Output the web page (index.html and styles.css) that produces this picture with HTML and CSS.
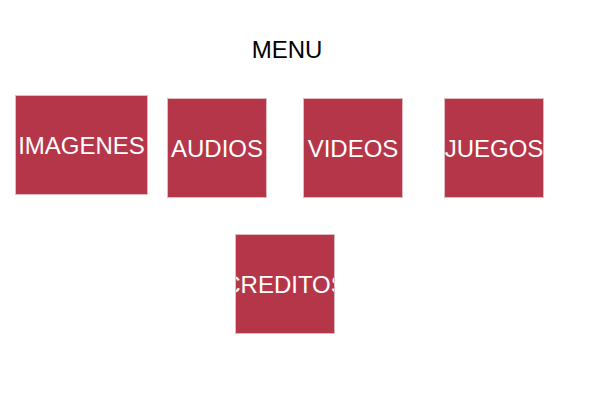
FILE: index.html
```html
<!DOCTYPE html>
<html lang="es">
<head>
<meta charset="utf-8">
<meta name="viewport" content="width=device-width, initial-scale=1">
<title>Menu</title>
<link rel="stylesheet" href="styles.css">
</head>
<body>
<main class="page">
  <h1 class="title">MENU</h1>
  <nav class="menu">
    <button class="tile tile-wide" type="button">IMAGENES</button>
    <button class="tile" type="button">AUDIOS</button>
    <button class="tile" type="button">VIDEOS</button>
    <button class="tile" type="button">JUEGOS</button>
  </nav>
  <div class="extra">
    <button class="tile" type="button">CREDITOS</button>
  </div>
</main>
</body>
</html>
```
FILE: styles.css
```css
* {
  box-sizing: border-box;
}

body {
  margin: 0;
  background: #fff;
  font-family: "Liberation Sans", Arial, sans-serif;
}

.page {
  padding: 36px 56px 0 15px;
}

.title {
  margin: 0 0 31px;
  padding-left: 15px;
  font-size: 24px;
  font-weight: 400;
  line-height: 28px;
  color: #000;
  text-align: center;
}

.menu {
  display: grid;
  grid-template-columns: 152fr 136fr 141fr 100fr;
  align-items: start;
}

.tile {
  display: flex;
  flex: none;
  align-items: center;
  justify-content: center;
  width: 100px;
  height: 100px;
  padding: 2px 0 0;
  border: 1px solid #e0bcc0;
  background: #b63649;
  color: #fff;
  font-family: inherit;
  font-size: 24px;
  line-height: 28px;
  white-space: nowrap;
  overflow: hidden;
}

.tile + .tile {
  margin-top: 3px;
}

.tile-wide {
  width: 133px;
}

.extra {
  display: flex;
  justify-content: center;
  padding-left: 11px;
  margin-top: 36px;
}
```
